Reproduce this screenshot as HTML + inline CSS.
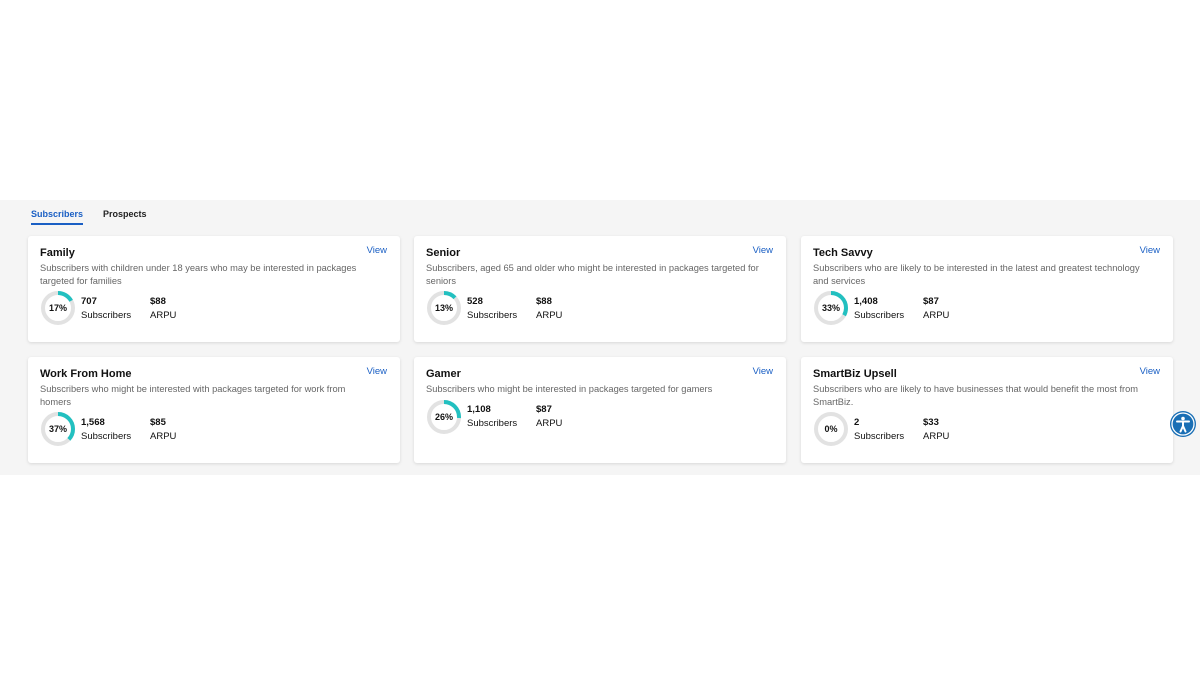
<!DOCTYPE html>
<html><head><meta charset="utf-8"><style>
*{box-sizing:border-box;margin:0;padding:0}
body{width:1200px;height:675px;background:#fff;font-family:"Liberation Sans",Arial,sans-serif;position:relative;overflow:hidden;color:#111}
.band{position:absolute;left:0;top:200px;width:1200px;height:275px;background:#f5f5f5}
.tab{position:absolute;top:209px;font-size:9px;font-weight:bold}
.t1{left:31px;color:#1a5fc4}
.t2{left:103px;color:#222}
.ul{position:absolute;left:31px;top:223px;width:52px;height:2px;background:#1a5fc4}
.card{position:absolute;width:372px;height:106px;background:#fff;border-radius:3px;box-shadow:0 1px 3px rgba(0,0,0,.12);padding:10px 12px 0 12px}
.title{font-size:11px;font-weight:bold;line-height:14px}
.view{position:absolute;right:13px;top:9px;font-size:9.5px;color:#1a5fc4}
.desc{font-size:9.3px;line-height:12.5px;color:#666;margin-top:2px;width:355px;white-space:nowrap}
.row{display:flex;align-items:center;margin-top:3px}
.donut{width:36px;height:36px;position:relative;margin-right:5px}
.donut svg{position:absolute;left:0;top:0}
.donut span{position:absolute;left:0;top:0;width:36px;line-height:36px;text-align:center;font-size:9px;font-weight:bold}
.stat{font-size:9.5px;line-height:14px;padding-top:1px}
.stat b{display:block}
.s1{width:69px}
</style></head><body>
<div class="band"></div>
<div class="tab t1">Subscribers</div><div class="tab t2">Prospects</div><div class="ul"></div>

<div class="card" style="left:28px;top:236px"><div class="title">Family</div><div class="view">View</div>
<div class="desc">Subscribers with children under 18 years who may be interested in packages<br>targeted for families</div>
<div class="row"><div class="donut"><svg width="36" height="36"><circle cx="18" cy="18" r="15" fill="none" stroke="#e2e2e2" stroke-width="4"/><circle cx="18" cy="18" r="15" fill="none" stroke="#22c0c0" stroke-width="4" stroke-dasharray="16 100" transform="rotate(-90 18 18)"/></svg><span>17%</span></div>
<div class="stat s1"><b>707</b>Subscribers</div><div class="stat"><b>$88</b>ARPU</div></div></div>

<div class="card" style="left:414px;top:236px"><div class="title">Senior</div><div class="view">View</div>
<div class="desc">Subscribers, aged 65 and older who might be interested in packages targeted for<br>seniors</div>
<div class="row"><div class="donut"><svg width="36" height="36"><circle cx="18" cy="18" r="15" fill="none" stroke="#e2e2e2" stroke-width="4"/><circle cx="18" cy="18" r="15" fill="none" stroke="#22c0c0" stroke-width="4" stroke-dasharray="12.3 100" transform="rotate(-90 18 18)"/></svg><span>13%</span></div>
<div class="stat s1"><b>528</b>Subscribers</div><div class="stat"><b>$88</b>ARPU</div></div></div>

<div class="card" style="left:801px;top:236px"><div class="title">Tech Savvy</div><div class="view">View</div>
<div class="desc">Subscribers who are likely to be interested in the latest and greatest technology<br>and services</div>
<div class="row"><div class="donut"><svg width="36" height="36"><circle cx="18" cy="18" r="15" fill="none" stroke="#e2e2e2" stroke-width="4"/><circle cx="18" cy="18" r="15" fill="none" stroke="#22c0c0" stroke-width="4" stroke-dasharray="31.1 100" transform="rotate(-90 18 18)"/></svg><span>33%</span></div>
<div class="stat s1"><b>1,408</b>Subscribers</div><div class="stat"><b>$87</b>ARPU</div></div></div>

<div class="card" style="left:28px;top:357px"><div class="title">Work From Home</div><div class="view">View</div>
<div class="desc">Subscribers who might be interested with packages targeted for work from<br>homers</div>
<div class="row"><div class="donut"><svg width="36" height="36"><circle cx="18" cy="18" r="15" fill="none" stroke="#e2e2e2" stroke-width="4"/><circle cx="18" cy="18" r="15" fill="none" stroke="#22c0c0" stroke-width="4" stroke-dasharray="34.9 100" transform="rotate(-90 18 18)"/></svg><span>37%</span></div>
<div class="stat s1"><b>1,568</b>Subscribers</div><div class="stat"><b>$85</b>ARPU</div></div></div>

<div class="card" style="left:414px;top:357px"><div class="title">Gamer</div><div class="view">View</div>
<div class="desc">Subscribers who might be interested in packages targeted for gamers</div>
<div class="row"><div class="donut"><svg width="36" height="36"><circle cx="18" cy="18" r="15" fill="none" stroke="#e2e2e2" stroke-width="4"/><circle cx="18" cy="18" r="15" fill="none" stroke="#22c0c0" stroke-width="4" stroke-dasharray="24.5 100" transform="rotate(-90 18 18)"/></svg><span>26%</span></div>
<div class="stat s1"><b>1,108</b>Subscribers</div><div class="stat"><b>$87</b>ARPU</div></div></div>

<div class="card" style="left:801px;top:357px"><div class="title">SmartBiz Upsell</div><div class="view">View</div>
<div class="desc">Subscribers who are likely to have businesses that would benefit the most from<br>SmartBiz.</div>
<div class="row"><div class="donut"><svg width="36" height="36"><circle cx="18" cy="18" r="15" fill="none" stroke="#e2e2e2" stroke-width="4"/></svg><span>0%</span></div>
<div class="stat s1"><b>2</b>Subscribers</div><div class="stat"><b>$33</b>ARPU</div></div></div>

<svg style="position:absolute;left:1170px;top:411px" width="26" height="26" viewBox="0 0 26 26">
<circle cx="13" cy="13" r="13" fill="#1a6fb5"/><circle cx="13" cy="13" r="11" fill="none" stroke="#fff" stroke-width="1.3"/>
<circle cx="13" cy="7.5" r="1.8" fill="#fff"/>
<path d="M7 10.5 L19 10.5 M13 10.5 L13 15 M13 15 L10.5 20.5 M13 15 L15.5 20.5" stroke="#fff" stroke-width="2" stroke-linecap="round" fill="none"/>
</svg>
</body></html>
